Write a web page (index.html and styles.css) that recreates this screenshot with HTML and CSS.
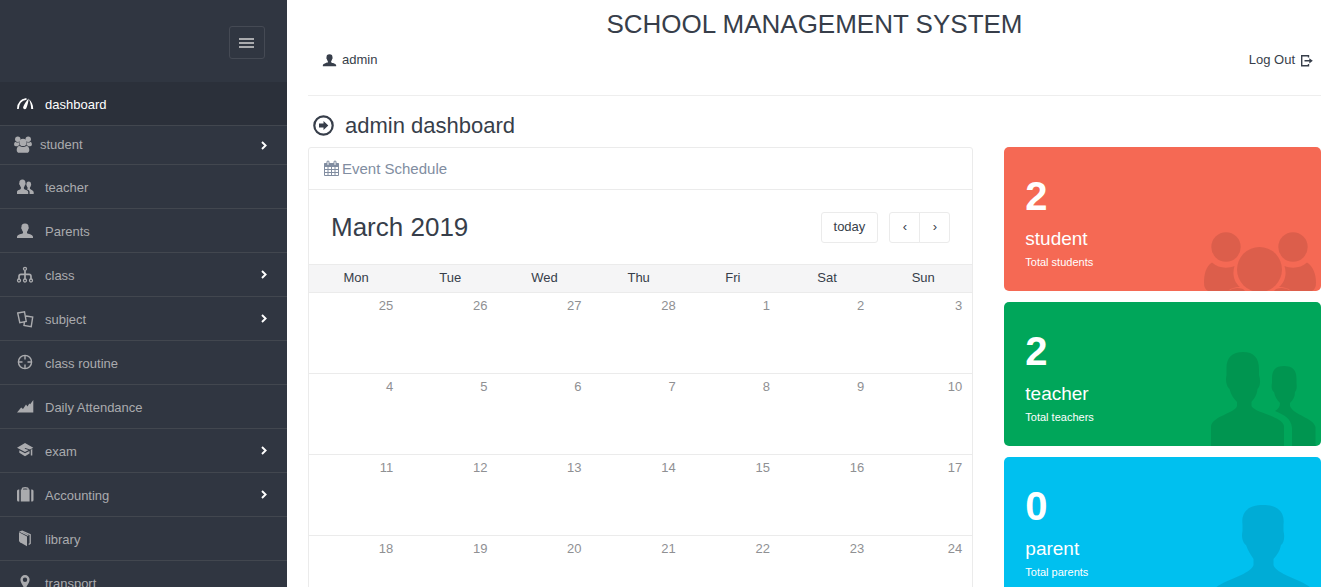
FILE: index.html
```html
<!DOCTYPE html>
<html lang="en">
<head>
<meta charset="utf-8">
<meta name="viewport" content="width=device-width, initial-scale=1">
<title>School Management System</title>
<link rel="stylesheet" href="styles.css">
</head>
<body>
<svg class="sprite" aria-hidden="true">
  <symbol id="i-chevron" viewBox="0 0 6 9"><path d="M1 1l3.600 3.500L1 8" fill="none" stroke="currentColor" stroke-width="1.900"/></symbol>
  <symbol id="i-user" viewBox="0 0 18 18"><path d="M9 1.500C6.400 1.500 5.300 2.900 5.500 5C4.900 5.500 5.300 7 5.900 7.400C6.100 8.500 6.600 9.200 7 9.700V11C6.400 12.300 1.200 12 1 14.800V16H17V14.800C16.800 12 11.600 12.300 11 11V9.700C11.400 9.200 11.900 8.500 12.100 7.400C12.700 7 13.100 5.500 12.500 5C12.700 2.900 11.600 1.500 9 1.500Z"/></symbol>
  <symbol id="i-two-users" viewBox="0 0 18 18"><path d="M6.400 1.500C4.300 1.500 3.200 2.800 3.400 4.700C2.900 5.200 3.200 6.700 3.800 7C4 8 4.400 8.700 4.900 9.200V10.500C4.400 12 1 11.900 1 14V16H12.200V14C12 11.900 8.400 12 7.900 10.500V9.200C8.400 8.700 8.800 8 9 7C9.600 6.700 9.900 5.200 9.400 4.700C9.600 2.800 8.500 1.500 6.400 1.500Z"/><path d="M12.700 3.400C11 3.400 10.400 4.500 10.500 6C10.100 6.500 10.400 7.600 10.800 7.900C11 8.700 11.200 9.100 11.600 9.500V10.400C11.400 10.700 11 11 10.700 11.200C12.500 12 13.500 12.400 13.600 13.900V16H17.700V14.200C17.500 12.300 14.300 11.900 13.900 10.600V9.500C14.300 9.100 14.500 8.700 14.700 7.900C15.100 7.600 15.400 6.500 15 6C15.100 4.500 14.300 3.400 12.700 3.400Z"/></symbol>
  <symbol id="i-group" viewBox="0 0 18 18"><circle cx="3.800" cy="3.200" r="2.700"/><circle cx="14.200" cy="3.200" r="2.700"/><circle cx="9" cy="6.400" r="3.600"/><path d="M.1 8.500C.1 6.600 1 6 1.600 6C2.600 6.700 3.900 6.700 5 6.300C5 7.700 5.300 8.600 5.900 9.300C4.800 9.300 4.200 9.700 3.700 10.200H1.700C.8 10.200.1 9.700.1 8.500ZM17.900 8.500C17.900 6.600 17 6 16.400 6C15.400 6.700 14.100 6.700 13 6.300C13 7.700 12.700 8.600 12.100 9.300C13.200 9.300 13.800 9.700 14.300 10.200H16.300C17.200 10.200 17.900 9.700 17.900 8.500ZM2.700 14C2.700 11.700 3.700 9.900 5.500 9.900C7.700 11.300 10.300 11.300 12.500 9.900C14.300 9.900 15.300 11.700 15.300 14C15.300 15.900 14.300 16.800 12.900 16.800H5.100C3.700 16.800 2.700 15.900 2.700 14Z"/></symbol>
  <symbol id="i-gauge" viewBox="0 0 18 18"><path d="M1.900 14C1.900 8.500 4.800 4.700 10.500 3.800" fill="none" stroke="currentColor" stroke-width="1.700"/><path d="M13 4.200C15.300 6 17.200 9.500 17.200 14H15.200C15.200 10.500 14.200 7 13 4.200ZM12.600 3.500C12.500 6.500 11.500 10.500 10.300 13.200C9.400 15.100 6.600 14.200 7.200 12.100C8 9.500 10.300 5.800 12.600 3.500Z"/></symbol>
  <symbol id="i-flow" viewBox="0 0 18 18"><g fill="none" stroke="currentColor" stroke-width="1.300"><circle cx="9" cy="2.800" r="1.500"/><circle cx="3" cy="14.500" r="1.500"/><circle cx="9" cy="14.500" r="1.500"/><circle cx="15" cy="14.500" r="1.500"/></g><path d="M9 4.500V13M3 13V10.500Q3 8.300 5 8.300H13Q15 8.300 15 10.500V13" fill="none" stroke="currentColor" stroke-width="1.700"/></symbol>
  <symbol id="i-docs" viewBox="0 0 18 18"><path d="M1.700 3L8.500 1.700L10.200 11.500L3.800 12.700ZM10 6L16.700 7L15.200 16.600L8 15.500L8.400 12" fill="none" stroke="currentColor" stroke-width="1.400"/></symbol>
  <symbol id="i-target" viewBox="0 0 18 18"><g fill="none" stroke="currentColor" stroke-width="1.400"><circle cx="9" cy="8" r="6.600"/><path d="M9 1V5.500M9 10.500V15M2 8H6.500M11.500 8H16"/></g></symbol>
  <symbol id="i-graph" viewBox="0 0 18 18"><path d="M1 14.500L5.200 9.600L7 11L10 6.600L11.500 8.400L13.300 5.500L14.200 6.200L17.300 2V14.500Z"/></symbol>
  <symbol id="i-cap" viewBox="0 0 18 18"><path d="M9 1L1 5.700L9 10L12.700 8.100L8.600 6.700L9.200 5.900L14 7.400L17.300 5.700Z"/><path d="M3.300 8.300V10.800L9 14.200L13.500 11.500V9L9 11.200ZM14.800 7.800L16.300 7V13.500H14.800Z"/></symbol>
  <symbol id="i-case" viewBox="0 0 18 18"><path d="M1 5Q1 3.500 2.500 3.500H3.300V15.500H2.500Q1 15.500 1 14ZM4.800 3.500H5.700V2.700Q5.700 1 9.200 1T12.700 2.700V3.500H13.600V15.500H4.800ZM7 3.500H11.400V2.800Q9.200 2 7 2.800ZM15.200 3.500H16Q17.500 3.500 17.500 5V14Q17.500 15.500 16 15.500H15.200Z"/></symbol>
  <symbol id="i-book" viewBox="0 0 18 18"><path d="M3 2.300L11 6.500V16.300L4 12.300Q3 11.500 3 10.500Z"/><path d="M3.500 2L6.200 1.200L14.200 4.700V13.500L12.700 14.500M12.300 5.500L5 2" fill="none" stroke="currentColor" stroke-width="1.300"/></symbol>
  <symbol id="i-pin" viewBox="0 0 18 18"><path fill-rule="evenodd" d="M9 1A4.600 4.600 0 0 0 4.400 5.700C4.400 9 8 12 9 17C10 12 13.600 9 13.600 5.700A4.600 4.600 0 0 0 9 1ZM9 3.500A2.200 2.200 0 1 1 9 7.900A2.200 2.200 0 1 1 9 3.500Z"/></symbol>
</svg>

<div class="app">
  <aside class="sidebar">
    <header class="sidebar-head">
      <button class="menu-toggle" type="button" aria-label="Toggle menu">
        <svg width="16" height="12" viewBox="0 0 16 12"><path d="M0 2H15M0 6H15M0 10H15" stroke="currentColor" stroke-width="2"/></svg>
      </button>
    </header>
    <nav>
      <ul class="menu">
        <li><a class="active" href="#"><svg class="icon"><use href="#i-gauge"/></svg><span>dashboard</span></a></li>
        <li class="compact"><a href="#"><svg class="icon"><use href="#i-group"/></svg><span>student</span><svg class="chevron"><use href="#i-chevron"/></svg></a></li>
        <li><a href="#"><svg class="icon"><use href="#i-two-users"/></svg><span>teacher</span></a></li>
        <li><a href="#"><svg class="icon"><use href="#i-user"/></svg><span>Parents</span></a></li>
        <li><a href="#"><svg class="icon"><use href="#i-flow"/></svg><span>class</span><svg class="chevron"><use href="#i-chevron"/></svg></a></li>
        <li><a href="#"><svg class="icon"><use href="#i-docs"/></svg><span>subject</span><svg class="chevron"><use href="#i-chevron"/></svg></a></li>
        <li><a href="#"><svg class="icon"><use href="#i-target"/></svg><span>class routine</span></a></li>
        <li><a href="#"><svg class="icon"><use href="#i-graph"/></svg><span>Daily Attendance</span></a></li>
        <li><a href="#"><svg class="icon"><use href="#i-cap"/></svg><span>exam</span><svg class="chevron"><use href="#i-chevron"/></svg></a></li>
        <li><a href="#"><svg class="icon"><use href="#i-case"/></svg><span>Accounting</span><svg class="chevron"><use href="#i-chevron"/></svg></a></li>
        <li><a href="#"><svg class="icon"><use href="#i-book"/></svg><span>library</span></a></li>
        <li><a href="#"><svg class="icon"><use href="#i-pin"/></svg><span>transport</span></a></li>
      </ul>
    </nav>
  </aside>

  <main class="main">
    <h1 class="site-title">SCHOOL MANAGEMENT SYSTEM</h1>
    <div class="user-bar">
      <a class="user-link" href="#"><svg class="user-icon"><use href="#i-user"/></svg>admin</a>
      <a class="user-link" href="#">Log Out
        <svg width="13" height="13" viewBox="0 0 13 13"><path d="M8.500 3.500V1.700H1.700V11.800H8.500V10" fill="none" stroke="currentColor" stroke-width="1.400"/><path d="M4.500 6H9.300V4.200L12.800 6.800L9.300 9.400V7.600H4.500Z"/></svg>
      </a>
    </div>

    <h2 class="page-title">
      <svg width="22" height="22" viewBox="0 0 22 22"><circle cx="11.500" cy="10.500" r="9.200" fill="none" stroke="currentColor" stroke-width="2.200"/><path d="M7 8.500H11.500V6L16.300 10.500L11.500 15V12.500H7Z"/></svg>
      admin dashboard
    </h2>

    <div class="columns">
      <section class="column">
        <div class="panel">
          <h3 class="panel-title">
            <svg width="15" height="18" viewBox="0 0 15 18"><path d="M.5 3.500H14.500V15.500H.5ZM.5 6.500H14.500M.5 9.500H14.500M.5 12.500H14.500M4 6.500V15.500M7.500 6.500V15.500M11 6.500V15.500" fill="none" stroke="currentColor"/><path d="M.5 3H14.500V6H.5Z"/><path d="M4 2V4.500M11 2V4.500" fill="none" stroke="currentColor" stroke-width="3" stroke-linecap="round"/><path d="M4 2V4.500M11 2V4.500" fill="none" stroke="#fff" stroke-linecap="round"/></svg>
            Event Schedule
          </h3>
          <div class="toolbar">
            <h2 class="month">March 2019</h2>
            <button class="tool-button today" type="button">today</button>
            <div class="pager">
              <button class="tool-button" type="button" aria-label="Previous month">‹</button>
              <button class="tool-button" type="button" aria-label="Next month">›</button>
            </div>
          </div>
          <table class="calendar">
            <thead><tr><th>Mon</th><th>Tue</th><th>Wed</th><th>Thu</th><th>Fri</th><th>Sat</th><th class="last">Sun</th></tr></thead>
            <tbody>
              <tr><td>25</td><td>26</td><td>27</td><td>28</td><td>1</td><td>2</td><td>3</td></tr>
              <tr><td>4</td><td>5</td><td>6</td><td>7</td><td>8</td><td>9</td><td>10</td></tr>
              <tr><td>11</td><td>12</td><td>13</td><td>14</td><td>15</td><td>16</td><td>17</td></tr>
              <tr><td>18</td><td>19</td><td>20</td><td>21</td><td>22</td><td>23</td><td>24</td></tr>
            </tbody>
          </table>
        </div>
      </section>

      <section class="column tiles">
        <article class="tile tile-red">
          <svg class="tile-icon" width="112" height="59" viewBox="0 0 112 59"><circle cx="22" cy="15" r="14.700"/><circle cx="89" cy="15" r="14.700"/><circle cx="55.500" cy="37.500" r="22.500"/><path d="M8 30.500C14 36 23 37 30.500 34C28 42 30 50 36 55C31 55 27 56 24 59H4Q0 57 0 51C0 42 2 34 8 30.500ZM103 30.500C97 36 88 37 80.500 34C83 42 81 50 75 55C80 55 84 56 87 59H108Q112 57 112 51C112 42 109 34 103 30.500ZM24 59Q31 54 39 57L41 59ZM87 59Q80 54 72 57L70 59Z"/></svg>
          <div class="count">2</div><h3>student</h3><p>Total students</p>
        </article>
        <article class="tile tile-green">
          <svg class="tile-icon" width="105" height="94" viewBox="0 0 105 94"><path d="M32 0C21 0 15 6 15.500 17V23C14 29 16 35 18.500 37C20 43 23 47 26 50V54C24 61 2 64 0 74V94H73V74C71 64 44 61 40.500 54V50C43 47 46 43 46.500 37C49 35 50 29 48 23V17C48 6 43 0 32 0Z"/><path d="M73 14C64 14 61 18 61 27V31C60 35 61 39 63 40C64 45 66 48 69 51C69 55 67 57 64 59C73 63 80 66 81 76V94H104.500V75C103 66 82 63 79 54V51C82 48 84 45 84 40C86 38 86 34 85.500 31V27C85.500 18 82 14 73 14Z"/></svg>
          <div class="count">2</div><h3>teacher</h3><p>Total teachers</p>
        </article>
        <article class="tile tile-blue">
          <svg class="tile-icon" width="105" height="96" viewBox="0 0 105 96"><path d="M52 0C36 0 30 8 31.500 20V26C30 32 32 38 35 40C37 46 40 50 42.500 54V60C39 71 6 76 1 87V96H103V87C99 76 66 71 62.500 60V54C66 50 69 46 70 40C73 38 74 32 72.500 26V20C74 8 68 0 52 0Z"/></svg>
          <div class="count">0</div><h3>parent</h3><p>Total parents</p>
        </article>
      </section>
    </div>
  </main>
</div>
</body>
</html>
```
FILE: styles.css
```css
* {
  box-sizing: border-box;
}

body {
  margin: 0;
  background: #fff;
  color: #373e4a;
  font: 13px/20px "Liberation Sans", Arial, sans-serif;
}

h1, h2, h3, p, ul {
  margin: 0;
  padding: 0;
  font-weight: 400;
}

a {
  color: inherit;
  text-decoration: none;
}

button {
  font: inherit;
  color: inherit;
  cursor: pointer;
}

svg {
  display: block;
  flex: none;
  fill: currentColor;
}

.sprite {
  display: none;
}

.app {
  display: flex;
  height: 100vh;
  overflow: hidden;
}

/* Sidebar */
.sidebar {
  flex: 0 0 287px;
  background: #303641;
  color: #aaabae;
}

.sidebar-head {
  display: flex;
  justify-content: flex-end;
  padding: 26px 22px 23px;
}

.menu-toggle {
  display: grid;
  place-items: center;
  width: 36px;
  height: 33px;
  padding: 0;
  border: 1px solid #454a54;
  border-radius: 3px;
  background: none;
}

.menu {
  list-style: none;
}

.menu a {
  display: flex;
  align-items: center;
  gap: 11px;
  height: 44px;
  padding: 0 20px 0 16px;
  border-bottom: 1px solid #42474f;
}

.menu span {
  padding-top: 2px;
}

.menu .active {
  background: #2b303a;
  color: #fff;
}

.menu .compact a {
  height: 39px;
  gap: 8px;
  padding-left: 14px;
}

.menu .compact span {
  padding-top: 0;
}

.icon {
  width: 18px;
  height: 18px;
}

.chevron {
  width: 6px;
  height: 9px;
  margin-left: auto;
  color: #fff;
}

/* Page header */
.main {
  flex: 1;
  min-width: 0;
  padding: 5px 14px 0 21px;
}

.site-title {
  font-size: 26px;
  line-height: 38px;
  text-align: center;
}

.user-bar {
  display: flex;
  justify-content: space-between;
  padding: 7px 8px 25px 14px;
  border-bottom: 1px solid #eee;
}

.user-link {
  display: flex;
  align-items: center;
  gap: 5px;
}

.user-icon {
  width: 15px;
  height: 15px;
}

.page-title {
  display: flex;
  align-items: center;
  gap: 11px;
  padding: 18px 4px 9px;
  font-size: 22px;
  line-height: 24px;
}

.columns {
  display: grid;
  grid-template-columns: 2fr 1fr;
  margin: 0 -15px;
}

.column {
  min-width: 0;
  padding: 0 15px;
}

/* Calendar */
.panel {
  border: 1px solid #ebebeb;
  border-radius: 3px;
}

.panel-title {
  display: flex;
  align-items: center;
  gap: 3px;
  padding: 10px 15px;
  border-bottom: 1px solid #ebebeb;
  color: #818da1;
  font-size: 15px;
  line-height: 21px;
}

.toolbar {
  display: flex;
  align-items: center;
  padding: 21px 22px;
}

.month {
  margin-right: auto;
  font-size: 26px;
  line-height: 32px;
}

.tool-button {
  height: 31px;
  padding: 0 12px;
  border: 1px solid #ebebeb;
  border-radius: 3px;
  background: #fff;
}

.today {
  margin-right: 11px;
}

.pager {
  display: flex;
}

.pager .tool-button {
  width: 31px;
}

.pager .tool-button:first-child {
  border-radius: 3px 0 0 3px;
}

.pager .tool-button:last-child {
  margin-left: -1px;
  border-radius: 0 3px 3px 0;
}

.calendar {
  width: 100%;
  table-layout: fixed;
  border-collapse: collapse;
}

.calendar th {
  width: 14.2%;
  height: 28px;
  padding: 0 0 2px;
  border-top: 1px solid #ebebeb;
  background: #f5f5f6;
  font-weight: 400;
}

.calendar .last {
  width: auto;
}

.calendar td {
  height: 81px;
  padding: 3px 10px;
  border-top: 1px solid #ebebeb;
  color: #8f9093;
  text-align: right;
  vertical-align: top;
}

/* Statistic tiles */
.column.tiles {
  display: flex;
  flex-direction: column;
  gap: 11px;
  padding-left: 16px;
}

.tile {
  position: relative;
  padding: 28px 21px 19px;
  border-radius: 5px;
  overflow: hidden;
  color: #fff;
}

.tile-red {
  background: #f56954;
}

.tile-green {
  background: #00a65a;
}

.tile-blue {
  background: #00c0ef;
}

.tile-icon {
  position: absolute;
  right: 5px;
  bottom: 0;
  color: rgba(0, 0, 0, 0.1);
}

.count {
  font-size: 40px;
  font-weight: 700;
  line-height: 42px;
}

.tile h3 {
  padding-top: 9px;
  font-size: 19px;
  line-height: 26px;
}

.tile p {
  font-size: 11px;
  line-height: 20px;
}
```
